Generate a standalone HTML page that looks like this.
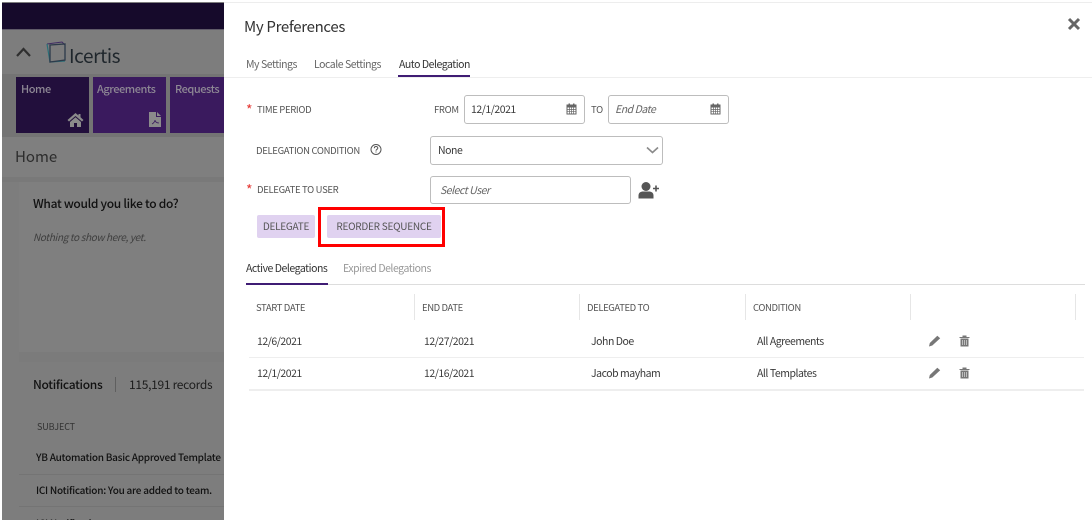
<!DOCTYPE html>
<html><head><meta charset="utf-8"><style>
html,body{margin:0;padding:0;background:#fff}
#p{position:relative;width:1092px;height:520px;overflow:hidden;background:#fff;font-family:"Noto Sans CJK JP","Liberation Sans",sans-serif;color:#333}
#p div,#p svg{position:absolute}
.t{white-space:nowrap;line-height:16px;height:16px}
.l{font-size:9.500px;color:#555;letter-spacing:-.33px}
.c{font-size:10.500px;color:#3a3a3a;letter-spacing:-.47px}
.n{font-size:10.500px;color:#666;letter-spacing:-.47px}
.h{font-size:9.500px;color:#555;letter-spacing:-.4px}
.s{font-size:11px;color:#8d8794;font-weight:500;letter-spacing:-.45px}
.b{font-size:12px;line-height:18px;height:18px;letter-spacing:-.3px}
.r{font-size:10px;font-weight:500;color:#111;letter-spacing:-.25px}
.box{background:#fff;border:1px solid #bdbdbd;border-radius:3px;box-sizing:border-box}
.vl{width:1px;background:#e6e6e6;top:294px;height:26px}
.m{background:#3a1a5e}
.bt{line-height:21px;height:23px;text-align:center;background:#e0d2f0;border-radius:2px;font-size:10px;color:#555;letter-spacing:-.25px}
</style></head><body><div id="p">
<div style="left:2px;top:2px;width:222px;height:518px;background:#7d7d7d"></div>
<div style="left:2px;top:3px;width:222px;height:26px;background:#160a2b"></div>
<div style="left:2px;top:29px;width:222px;height:1px;background:#5f5a68"></div>
<div style="left:2px;top:74px;width:222px;height:64px;background:#747474"></div>
<div style="left:2px;top:137px;width:222px;height:41px;background:#7f7f7f"></div>
<div style="left:2px;top:177px;width:222px;height:5px;background:#797979"></div>
<div style="left:19px;top:182px;width:205px;height:170px;background:#7f7f7f"></div>
<div style="left:19px;top:352px;width:205px;height:10px;background:#7b7b7b"></div>
<svg style="left:15px;top:46px" width="17" height="12" viewBox="0 0 17 12"><path d="M2 10L8.500 3L15 10" fill="none" stroke="#2f2f2f" stroke-width="2.200"/></svg>
<svg style="left:45px;top:40px" width="24" height="26" viewBox="0 0 24 26"><path d="M2 4L17 2L20 5" fill="none" stroke="#3f2b63" stroke-width="1"/><path d="M2 4L5 22L20 21" fill="none" stroke="#2a6f78" stroke-width="1.200"/><path d="M5 5L20 4L20 20L5 22Z" fill="none" stroke="#2d3a4a" stroke-width="1.300"/></svg>
<div class="t" style="left:69px;top:44px;font-size:19px;line-height:24px;height:24px;color:#1f262c;letter-spacing:-.4px">Icertis</div>
<div class="m" style="left:16px;top:77px;width:73px;height:56px;background:#220f3c"></div>
<div class="m" style="left:93px;top:77px;width:73px;height:56px"></div>
<div class="m" style="left:170px;top:77px;width:54px;height:56px"></div>
<div class="t s" style="left:21px;top:81px">Home</div>
<div class="t s" style="left:97px;top:81px">Agreements</div>
<div class="t s" style="left:175px;top:81px">Requests</div>
<svg style="left:67px;top:112px" width="17" height="15" viewBox="0 0 17 15"><path d="M8.500 1L0.500 8L2 9.500L8.500 4L15 9.500L16.500 8L13.500 5.300V2H11.500V3.500Z" fill="#8b8b8b"/><path d="M3 10L8.500 5.300L14 10V15H10V11H7V15H3Z" fill="#8b8b8b"/></svg>
<svg style="left:149px;top:112px" width="12" height="15" viewBox="0 0 12 15"><path d="M0 0H7V5H12V15H0Z" fill="#8b8b8b"/><path d="M8 0L12 4H8Z" fill="#8b8b8b"/><path d="M3 12C5 11 6 9 6 8C6 10 8 11 10 11" fill="none" stroke="#3a1a5e" stroke-width=".8"/></svg>
<div class="t" style="left:15px;top:147px;font-size:15px;line-height:20px;height:20px;color:#2c2c2c;">Home</div>
<div class="t b" style="left:33px;top:195px;font-weight:500;color:#111">What would you like to do?</div>
<div class="t" style="left:33px;top:229px;font-size:10px;font-style:italic;color:#3f3f3f;letter-spacing:-.35px">Nothing to show here, yet.</div>
<div class="t b" style="left:33px;top:376px;font-weight:500;color:#111">Notifications</div>
<div style="left:115px;top:377px;width:1px;height:15px;background:#5f5f5f"></div>
<div class="t b" style="left:129px;top:376px;color:#1d1d1d">115,191 records</div>
<div class="t" style="left:37px;top:419px;font-size:9px;color:#333;letter-spacing:-.1px">SUBJECT</div>
<div class="t r" style="left:36px;top:449px">YB Automation Basic Approved Template</div>
<div style="left:19px;top:474px;width:205px;height:1px;background:#747474"></div>
<div class="t r" style="left:36px;top:482px">ICI Notification: You are added to team.</div>
<div style="left:19px;top:506px;width:205px;height:1px;background:#747474"></div>
<div class="t r" style="left:36px;top:515px">ICI Notification</div>
<div style="left:224px;top:0;width:868px;height:520px;background:#fff;overflow:hidden"></div>
<div style="left:224px;top:2px;width:868px;height:1px;background:#ededed"></div>
<div class="t" style="left:244px;top:17px;font-size:15px;line-height:20px;height:20px;color:#333;letter-spacing:-.32px">My Preferences</div>
<svg style="left:1067px;top:17px" width="14" height="14" viewBox="0 0 14 14"><path d="M2 2L12 12M12 2L2 12" stroke="#666" stroke-width="3"/></svg>
<div class="t n" style="left:246px;top:57px">My Settings</div>
<div class="t n" style="left:314px;top:57px">Locale Settings</div>
<div class="t c" style="left:399px;top:57px;color:#333">Auto Delegation</div>
<div style="left:224px;top:77px;width:868px;height:1px;background:#eee"></div>
<div style="left:398px;top:75px;width:72px;height:2px;background:#3f1c74"></div>
<div class="t" style="left:246px;top:102px;font-size:14px;color:#e53935">*</div>
<div class="t l" style="left:257px;top:101px">TIME PERIOD</div>
<div class="t l" style="left:434px;top:101px">FROM</div>
<div class="box" style="left:464px;top:95px;width:121px;height:29px"></div>
<div class="t c" style="left:471px;top:102px">12/1/2021</div>
<svg style="left:566px;top:103px" width="11" height="12" viewBox="0 0 11 12"><path d="M1 2H10V11H1Z" fill="none" stroke="#666"/><rect x="1" y="2" width="9" height="2.500" fill="#666"/><rect x="2.500" y="0.500" width="1.500" height="2.500" fill="#666"/><rect x="7" y="0.500" width="1.500" height="2.500" fill="#666"/><path d="M1 6.500H10M1 8.700H10M3.500 4.500V11M5.500 4.500V11M7.500 4.500V11" stroke="#666" stroke-width=".7"/></svg>
<div class="t l" style="left:591px;top:101px">TO</div>
<div class="box" style="left:608px;top:95px;width:121px;height:29px"></div>
<div class="t n" style="left:615px;top:102px;font-style:italic">End Date</div>
<svg style="left:710px;top:103px" width="11" height="12" viewBox="0 0 11 12"><path d="M1 2H10V11H1Z" fill="none" stroke="#666"/><rect x="1" y="2" width="9" height="2.500" fill="#666"/><rect x="2.500" y="0.500" width="1.500" height="2.500" fill="#666"/><rect x="7" y="0.500" width="1.500" height="2.500" fill="#666"/><path d="M1 6.500H10M1 8.700H10M3.500 4.500V11M5.500 4.500V11M7.500 4.500V11" stroke="#666" stroke-width=".7"/></svg>
<div class="t l" style="left:256px;top:142px">DELEGATION CONDITION</div>
<svg style="left:370px;top:143px" width="12" height="13" viewBox="0 0 12 13"><circle cx="6" cy="6.500" r="5" fill="none" stroke="#555" stroke-width="1"/><path d="M4.300 5.200C4.300 3 7.800 3 7.800 5.100C7.800 6.400 6 6.300 6 7.800" fill="none" stroke="#555"/><rect x="5.500" y="8.500" width="1" height="1" fill="#555"/></svg>
<div class="box" style="left:430px;top:136px;width:233px;height:29px"></div>
<div class="t c" style="left:438px;top:143px">None</div>
<svg style="left:646px;top:146px" width="13" height="9" viewBox="0 0 13 9"><path d="M1 1.500L6.500 6.500L12 1.500" fill="none" stroke="#8a8a8a" stroke-width="1.600"/></svg>
<div class="t" style="left:246px;top:182px;font-size:14px;color:#e53935">*</div>
<div class="t l" style="left:257px;top:181px">DELEGATE TO USER</div>
<div class="box" style="left:430px;top:176px;width:201px;height:28px"></div>
<div class="t n" style="left:440px;top:183px;font-style:italic">Select User</div>
<svg style="left:638px;top:181px" width="22" height="19" viewBox="0 0 22 18"><circle cx="8" cy="5" r="4.500" fill="#555"/><path d="M0.500 17V14C0.500 11 3 10 5 10H11C13 10 15.500 11 15.500 14V17Z" fill="#555"/><path d="M15 7H21M18 4V10" stroke="#555" stroke-width="1.600"/></svg>
<div class="t bt" style="left:257px;top:215px;width:58px">DELEGATE</div>
<div style="left:318px;top:207px;width:127px;height:40px;border:3px solid #f00;box-sizing:border-box"></div>
<div class="t bt" style="left:327px;top:215px;width:114px">REORDER SEQUENCE</div>
<div class="t c" style="left:246px;top:261px;color:#333">Active Delegations</div>
<div class="t c" style="left:343px;top:261px;color:#999">Expired Delegations</div>
<div style="left:246px;top:284px;width:839px;height:1px;background:#ddd"></div>
<div style="left:246px;top:283px;width:82px;height:2px;background:#3f1c74"></div>
<div class="t h" style="left:256px;top:299px">START DATE</div>
<div class="vl" style="left:414px"></div>
<div class="t h" style="left:422px;top:299px">END DATE</div>
<div class="vl" style="left:579px"></div>
<div class="t h" style="left:587px;top:299px">DELEGATED TO</div>
<div class="vl" style="left:745px"></div>
<div class="t h" style="left:753px;top:299px">CONDITION</div>
<div class="vl" style="left:910px"></div>
<div class="vl" style="left:1075px"></div>
<div class="t c" style="left:257px;top:334px">12/6/2021</div>
<div class="t c" style="left:424px;top:334px">12/27/2021</div>
<div class="t c" style="left:591px;top:334px">John Doe</div>
<div class="t c" style="left:757px;top:334px">All Agreements</div>
<div style="left:249px;top:357px;width:835px;height:1px;background:#eee"></div>
<div class="t c" style="left:257px;top:366px">12/1/2021</div>
<div class="t c" style="left:424px;top:366px">12/16/2021</div>
<div class="t c" style="left:591px;top:366px">Jacob mayham</div>
<div class="t c" style="left:757px;top:366px">All Templates</div>
<div style="left:249px;top:389px;width:835px;height:2px;background:#eee"></div>
<svg style="left:928px;top:335px" width="13" height="12" viewBox="0 0 13 12"><path d="M1 11.500L1.800 8L9.300 .8L12.200 3.300L4.300 10.500Z" fill="#777"/></svg>
<svg style="left:959px;top:335px" width="11" height="12" viewBox="0 0 11 12"><path d="M0.500 2H10.500V3H0.500ZM3.500 0.500H7.500V2H3.500ZM1.500 3.500H9.500V11.500H1.500Z" fill="#777"/><path d="M3.500 5V10M5.500 5V10M7.500 5V10" stroke="#ddd" stroke-width=".7"/></svg>
<svg style="left:928px;top:367px" width="13" height="12" viewBox="0 0 13 12"><path d="M1 11.500L1.800 8L9.300 .8L12.200 3.300L4.300 10.500Z" fill="#777"/></svg>
<svg style="left:959px;top:367px" width="11" height="12" viewBox="0 0 11 12"><path d="M0.500 2H10.500V3H0.500ZM3.500 0.500H7.500V2H3.500ZM1.500 3.500H9.500V11.500H1.500Z" fill="#777"/><path d="M3.500 5V10M5.500 5V10M7.500 5V10" stroke="#ddd" stroke-width=".7"/></svg>
</div></body></html>
